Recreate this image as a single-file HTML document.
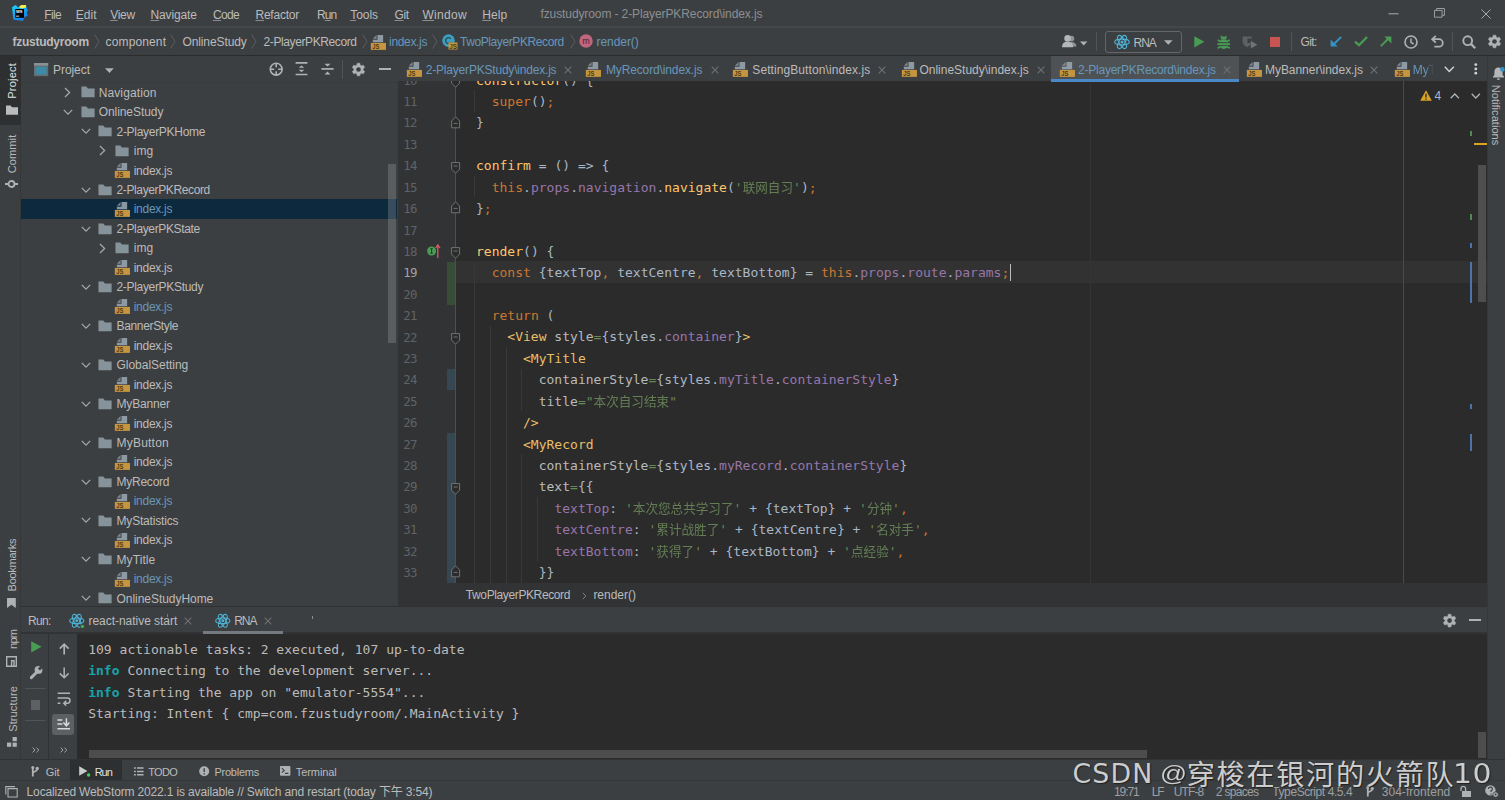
<!DOCTYPE html>
<html lang="en">
<head>
<meta charset="utf-8">
<title>fzustudyroom - 2-PlayerPKRecord\index.js</title>
<style>
*{box-sizing:border-box;margin:0;padding:0}
html,body{width:1505px;height:800px;overflow:hidden;background:#3c3f41}
body{position:relative;font-family:"Liberation Sans","Noto Sans CJK SC",sans-serif;font-size:12px;color:#bbbbbb}
.abs{position:absolute}
svg{display:block;overflow:visible}
.t{position:absolute;white-space:pre;line-height:16px;height:16px}
.mono{font-family:"DejaVu Sans Mono","Liberation Mono","Noto Sans CJK SC",monospace}
.code{font-size:13px;letter-spacing:0.014px}
.cj{font-size:12.58px;opacity:.9}
.con{font-size:13px;letter-spacing:0.014px;color:#bbbbbb}
.wm{font-family:"Liberation Sans","Noto Sans CJK SC",sans-serif;text-shadow:1px 1px 1px rgba(30,30,30,.9),0 0 1px rgba(40,40,40,.8)}
u{text-decoration:underline;text-underline-offset:1px;text-decoration-thickness:1px;text-decoration-color:rgba(187,187,187,.62)}
#menubar{left:0;top:0;width:1505px;height:27px;background:#3c3f41}
#navbar{left:0;top:26px;width:1505px;height:29px;background:#3c3f41;border-top:2px solid #45484a}
#navline{left:0;top:55px;width:1505px;height:1px;background:#2b2b2b}
#lstripe{left:0;top:56px;width:21px;height:704px;background:#3c3f41;border-right:1px solid #353739}
#lstripe-sel{left:0;top:56px;width:21px;height:69px;background:#2d2f30}
#proj{left:21px;top:56px;width:377px;height:550px;background:#3c3f41;overflow:hidden}
#projhead-line{left:21px;top:82px;width:377px;height:1px;background:#393b3d}
#tabs{left:398px;top:56px;width:1089px;height:25px;background:#3c3f41}
#editor{left:398px;top:81px;width:1089px;height:502px;background:#2b2b2b;overflow:hidden}
#gutter{left:0;top:0;width:57px;height:502px;background:#313335}
#crumbs{left:398px;top:583px;width:1089px;height:24px;background:#313335}
#rstripe{left:1487px;top:56px;width:18px;height:704px;background:#3c3f41;border-left:1px solid #353739}
#runsep{left:21px;top:606px;width:1466px;height:1px;background:#2f3133}
#runhead{left:21px;top:607px;width:1466px;height:26px;background:#3c3f41}
#runheadline{left:21px;top:632px;width:1466px;height:2px;background:#313335}
#runbody{left:77px;top:634px;width:1410px;height:125px;background:#2b2b2b}
#runtools{left:21px;top:634px;width:56px;height:126px;background:#3c3f41}
#bottombar{left:0;top:759px;width:1505px;height:21px;background:#3c3f41;border-top:1px solid #323232}
#status{left:0;top:780px;width:1505px;height:20px;background:#3c3f41;border-top:1px solid #353739}
</style>
</head>
<body>
<div class="abs" id="menubar"></div>
<div class="abs" id="navbar"></div>
<div class="abs" id="navline"></div>
<div class="abs" id="lstripe"></div>
<div class="abs" id="lstripe-sel"></div>
<div class="abs" id="proj"></div>
<div class="abs" id="projhead-line"></div>
<div class="abs" id="tabs"></div>
<div class="abs" id="editor"><div class="abs" id="gutter"></div>
<div class="abs" style="left:57.0px;top:180.4px;width:1032.0px;height:21.4px;background:#323232;"></div>
<div class="abs" style="left:691.6px;top:0.0px;width:1.0px;height:502.0px;background:#353535;"></div>
<div class="abs" style="left:1005.2px;top:0.0px;width:1.0px;height:502.0px;background:#4a4a4a;"></div>
<div class="abs" style="left:48.8px;top:180.6px;width:8.4px;height:43.0px;background:#384c38;"></div>
<div class="abs" style="left:48.8px;top:288.0px;width:8.4px;height:21.4px;background:#374752;"></div>
<div class="abs" style="left:48.8px;top:352.2px;width:8.4px;height:160.0px;background:#374752;"></div>
<div class="abs" style="left:57.0px;top:0.0px;width:1.0px;height:502.0px;background:#4d4f51;"></div>
<div class="abs" style="left:76.2px;top:9.3px;width:1.0px;height:21.4px;background:#393939;"></div>
<div class="abs" style="left:76.2px;top:95.0px;width:1.0px;height:21.4px;background:#393939;"></div>
<div class="abs" style="left:76.2px;top:180.6px;width:1.0px;height:321.1px;background:#393939;"></div>
<div class="abs" style="left:91.9px;top:244.8px;width:1.0px;height:256.9px;background:#393939;"></div>
<div class="abs" style="left:107.5px;top:266.2px;width:1.0px;height:235.5px;background:#393939;"></div>
<div class="abs" style="left:123.2px;top:287.6px;width:1.0px;height:42.8px;background:#393939;"></div>
<div class="abs" style="left:123.2px;top:373.3px;width:1.0px;height:128.5px;background:#393939;"></div>
<div class="abs" style="left:138.9px;top:416.1px;width:1.0px;height:64.2px;background:#393939;"></div>
<div class="t mono" style="left:5.3px;top:-8.4px;color:#606366;font-size:12.4px;letter-spacing:-0.75px;">10</div>
<div class="t mono" style="left:5.3px;top:13.0px;color:#606366;font-size:12.4px;letter-spacing:-0.75px;">11</div>
<div class="t mono" style="left:5.3px;top:34.4px;color:#606366;font-size:12.4px;letter-spacing:-0.75px;">12</div>
<div class="t mono" style="left:5.3px;top:55.8px;color:#606366;font-size:12.4px;letter-spacing:-0.75px;">13</div>
<div class="t mono" style="left:5.3px;top:77.2px;color:#606366;font-size:12.4px;letter-spacing:-0.75px;">14</div>
<div class="t mono" style="left:5.3px;top:98.7px;color:#606366;font-size:12.4px;letter-spacing:-0.75px;">15</div>
<div class="t mono" style="left:5.3px;top:120.1px;color:#606366;font-size:12.4px;letter-spacing:-0.75px;">16</div>
<div class="t mono" style="left:5.3px;top:141.5px;color:#606366;font-size:12.4px;letter-spacing:-0.75px;">17</div>
<div class="t mono" style="left:5.3px;top:162.9px;color:#606366;font-size:12.4px;letter-spacing:-0.75px;">18</div>
<div class="t mono" style="left:5.3px;top:184.3px;color:#a4a3a3;font-size:12.4px;letter-spacing:-0.75px;">19</div>
<div class="t mono" style="left:5.3px;top:205.7px;color:#606366;font-size:12.4px;letter-spacing:-0.75px;">20</div>
<div class="t mono" style="left:5.3px;top:227.1px;color:#606366;font-size:12.4px;letter-spacing:-0.75px;">21</div>
<div class="t mono" style="left:5.3px;top:248.5px;color:#606366;font-size:12.4px;letter-spacing:-0.75px;">22</div>
<div class="t mono" style="left:5.3px;top:269.9px;color:#606366;font-size:12.4px;letter-spacing:-0.75px;">23</div>
<div class="t mono" style="left:5.3px;top:291.4px;color:#606366;font-size:12.4px;letter-spacing:-0.75px;">24</div>
<div class="t mono" style="left:5.3px;top:312.8px;color:#606366;font-size:12.4px;letter-spacing:-0.75px;">25</div>
<div class="t mono" style="left:5.3px;top:334.2px;color:#606366;font-size:12.4px;letter-spacing:-0.75px;">26</div>
<div class="t mono" style="left:5.3px;top:355.6px;color:#606366;font-size:12.4px;letter-spacing:-0.75px;">27</div>
<div class="t mono" style="left:5.3px;top:377.0px;color:#606366;font-size:12.4px;letter-spacing:-0.75px;">28</div>
<div class="t mono" style="left:5.3px;top:398.4px;color:#606366;font-size:12.4px;letter-spacing:-0.75px;">29</div>
<div class="t mono" style="left:5.3px;top:419.8px;color:#606366;font-size:12.4px;letter-spacing:-0.75px;">30</div>
<div class="t mono" style="left:5.3px;top:441.2px;color:#606366;font-size:12.4px;letter-spacing:-0.75px;">31</div>
<div class="t mono" style="left:5.3px;top:462.6px;color:#606366;font-size:12.4px;letter-spacing:-0.75px;">32</div>
<div class="t mono" style="left:5.3px;top:484.0px;color:#606366;font-size:12.4px;letter-spacing:-0.75px;">33</div>
<svg class="abs" style="left:52.8px;top:-4.9px;" width="10" height="12" viewBox="0 0 10 12"><path d="M0.6,0.6 h8 v6.6 l-4,4 l-4,-4z" fill="#2b2b2b" stroke="#6f7376" stroke-width="1"/><path d="M2.6,4 h4" stroke="#6f7376" stroke-width="1"/></svg>
<svg class="abs" style="left:52.8px;top:80.7px;" width="10" height="12" viewBox="0 0 10 12"><path d="M0.6,0.6 h8 v6.6 l-4,4 l-4,-4z" fill="#2b2b2b" stroke="#6f7376" stroke-width="1"/><path d="M2.6,4 h4" stroke="#6f7376" stroke-width="1"/></svg>
<svg class="abs" style="left:52.8px;top:166.4px;" width="10" height="12" viewBox="0 0 10 12"><path d="M0.6,0.6 h8 v6.6 l-4,4 l-4,-4z" fill="#2b2b2b" stroke="#6f7376" stroke-width="1"/><path d="M2.6,4 h4" stroke="#6f7376" stroke-width="1"/></svg>
<svg class="abs" style="left:52.8px;top:252.0px;" width="10" height="12" viewBox="0 0 10 12"><path d="M0.6,0.6 h8 v6.6 l-4,4 l-4,-4z" fill="#2b2b2b" stroke="#6f7376" stroke-width="1"/><path d="M2.6,4 h4" stroke="#6f7376" stroke-width="1"/></svg>
<svg class="abs" style="left:52.8px;top:401.9px;" width="10" height="12" viewBox="0 0 10 12"><path d="M0.6,0.6 h8 v6.6 l-4,4 l-4,-4z" fill="#2b2b2b" stroke="#6f7376" stroke-width="1"/><path d="M2.6,4 h4" stroke="#6f7376" stroke-width="1"/></svg>
<svg class="abs" style="left:52.8px;top:34.6px;" width="10" height="13" viewBox="0 0 10 13"><path d="M0.6,11.8 h8 v-6.8 l-4,-4.2 l-4,4.2z" fill="#2b2b2b" stroke="#6f7376" stroke-width="1"/><path d="M2.6,7.4 h4" stroke="#6f7376" stroke-width="1"/></svg>
<svg class="abs" style="left:52.8px;top:120.3px;" width="10" height="13" viewBox="0 0 10 13"><path d="M0.6,11.8 h8 v-6.8 l-4,-4.2 l-4,4.2z" fill="#2b2b2b" stroke="#6f7376" stroke-width="1"/><path d="M2.6,7.4 h4" stroke="#6f7376" stroke-width="1"/></svg>
<svg class="abs" style="left:52.8px;top:484.2px;" width="10" height="13" viewBox="0 0 10 13"><path d="M0.6,11.8 h8 v-6.8 l-4,-4.2 l-4,4.2z" fill="#2b2b2b" stroke="#6f7376" stroke-width="1"/><path d="M2.6,7.4 h4" stroke="#6f7376" stroke-width="1"/></svg>
<svg class="abs" style="left:29.0px;top:162.5px;" width="14" height="15" viewBox="0 0 14 15"><circle cx="4.6" cy="7" r="4.5" fill="#499c54"/><path d="M3.4,4.7 h2.4 M4.6,4.7 v4.6 M3.4,9.3 h2.4" stroke="#1d3a22" stroke-width="0.9" fill="none"/><path d="M10.8,14 V1.6 M8.6,4 L10.8,0.8 L13,4" stroke="#db5860" stroke-width="1.3" fill="none"/></svg>
<div class="t mono code" style="left:78.0px;top:-10.5px;height:20px;line-height:20px;"><span style="color:#ffc66d">constructor</span><span style="color:#a9b7c6">() {</span></div>
<div class="t mono code" style="left:93.7px;top:10.9px;height:20px;line-height:20px;"><span style="color:#cc7832">super</span><span style="color:#a9b7c6">()</span><span style="color:#cc7832">;</span></div>
<div class="t mono code" style="left:78.0px;top:32.3px;height:20px;line-height:20px;"><span style="color:#a9b7c6">}</span></div>
<div class="t mono code" style="left:78.0px;top:75.1px;height:20px;line-height:20px;"><span style="color:#ffc66d">confirm</span><span style="color:#a9b7c6"> = () =&gt; {</span></div>
<div class="t mono code" style="left:93.7px;top:96.6px;height:20px;line-height:20px;"><span style="color:#cc7832">this</span><span style="color:#a9b7c6">.</span><span style="color:#9876aa">props</span><span style="color:#a9b7c6">.</span><span style="color:#9876aa">navigation</span><span style="color:#a9b7c6">.</span><span style="color:#ffc66d">navigate</span><span style="color:#a9b7c6">(</span><span style="color:#6a8759">'<span class="cj">联网自习</span>'</span><span style="color:#a9b7c6">)</span><span style="color:#cc7832">;</span></div>
<div class="t mono code" style="left:78.0px;top:118.0px;height:20px;line-height:20px;"><span style="color:#a9b7c6">}</span><span style="color:#cc7832">;</span></div>
<div class="t mono code" style="left:78.0px;top:160.8px;height:20px;line-height:20px;"><span style="color:#ffc66d">render</span><span style="color:#a9b7c6">() {</span></div>
<div class="t mono code" style="left:93.7px;top:182.2px;height:20px;line-height:20px;"><span style="color:#cc7832">const </span><span style="color:#a9b7c6">{textTop</span><span style="color:#cc7832">,</span><span style="color:#a9b7c6"> textCentre</span><span style="color:#cc7832">,</span><span style="color:#a9b7c6"> textBottom} = </span><span style="color:#cc7832">this</span><span style="color:#a9b7c6">.</span><span style="color:#9876aa">props</span><span style="color:#a9b7c6">.</span><span style="color:#9876aa">route</span><span style="color:#a9b7c6">.</span><span style="color:#9876aa">params</span><span style="color:#cc7832">;</span></div>
<div class="t mono code" style="left:93.7px;top:225.0px;height:20px;line-height:20px;"><span style="color:#cc7832">return </span><span style="color:#a9b7c6">(</span></div>
<div class="t mono code" style="left:109.3px;top:246.4px;height:20px;line-height:20px;"><span style="color:#e8bf6a">&lt;View </span><span style="color:#bababa">style</span><span style="color:#6a8759">=</span><span style="color:#a9b7c6">{styles.</span><span style="color:#9876aa">container</span><span style="color:#a9b7c6">}</span><span style="color:#e8bf6a">&gt;</span></div>
<div class="t mono code" style="left:125.0px;top:267.8px;height:20px;line-height:20px;"><span style="color:#e8bf6a">&lt;MyTitle</span></div>
<div class="t mono code" style="left:140.7px;top:289.2px;height:20px;line-height:20px;"><span style="color:#bababa">containerStyle</span><span style="color:#6a8759">=</span><span style="color:#a9b7c6">{styles.</span><span style="color:#9876aa">myTitle</span><span style="color:#a9b7c6">.</span><span style="color:#9876aa">containerStyle</span><span style="color:#a9b7c6">}</span></div>
<div class="t mono code" style="left:140.7px;top:310.7px;height:20px;line-height:20px;"><span style="color:#bababa">title</span><span style="color:#6a8759">="<span class="cj">本次自习结束</span>"</span></div>
<div class="t mono code" style="left:125.0px;top:332.1px;height:20px;line-height:20px;"><span style="color:#e8bf6a">/&gt;</span></div>
<div class="t mono code" style="left:125.0px;top:353.5px;height:20px;line-height:20px;"><span style="color:#e8bf6a">&lt;MyRecord</span></div>
<div class="t mono code" style="left:140.7px;top:374.9px;height:20px;line-height:20px;"><span style="color:#bababa">containerStyle</span><span style="color:#6a8759">=</span><span style="color:#a9b7c6">{styles.</span><span style="color:#9876aa">myRecord</span><span style="color:#a9b7c6">.</span><span style="color:#9876aa">containerStyle</span><span style="color:#a9b7c6">}</span></div>
<div class="t mono code" style="left:140.7px;top:396.3px;height:20px;line-height:20px;"><span style="color:#bababa">text</span><span style="color:#6a8759">=</span><span style="color:#a9b7c6">{{</span></div>
<div class="t mono code" style="left:156.4px;top:417.7px;height:20px;line-height:20px;"><span style="color:#9876aa">textTop</span><span style="color:#a9b7c6">: </span><span style="color:#6a8759">'<span class="cj">本次您总共学习了</span>'</span><span style="color:#a9b7c6"> + {textTop} + </span><span style="color:#6a8759">'<span class="cj">分钟</span>'</span><span style="color:#cc7832">,</span></div>
<div class="t mono code" style="left:156.4px;top:439.1px;height:20px;line-height:20px;"><span style="color:#9876aa">textCentre</span><span style="color:#a9b7c6">: </span><span style="color:#6a8759">'<span class="cj">累计战胜了</span>'</span><span style="color:#a9b7c6"> + {textCentre} + </span><span style="color:#6a8759">'<span class="cj">名对手</span>'</span><span style="color:#cc7832">,</span></div>
<div class="t mono code" style="left:156.4px;top:460.5px;height:20px;line-height:20px;"><span style="color:#9876aa">textBottom</span><span style="color:#a9b7c6">: </span><span style="color:#6a8759">'<span class="cj">获得了</span>'</span><span style="color:#a9b7c6"> + {textBottom} + </span><span style="color:#6a8759">'<span class="cj">点经验</span>'</span><span style="color:#cc7832">,</span></div>
<div class="t mono code" style="left:140.7px;top:481.9px;height:20px;line-height:20px;"><span style="color:#a9b7c6">}}</span></div>
<div class="abs" style="left:611.6px;top:183.4px;width:1.6px;height:16.4px;background:#bbbbbb;"></div>
<svg class="abs" style="left:1022.0px;top:8.8px;" width="12" height="11" viewBox="0 0 12 11"><path d="M6,0.3 L11.8,10.7 H0.2z" fill="#d9a520"/><path d="M6,3.8 v3.6 M6,8.4 v1.3" stroke="#2b2b2b" stroke-width="1.4"/></svg>
<div class="t" style="left:1036.6px;top:7.0px;color:#a9b7c6;letter-spacing:0.000px;">4</div>
<svg class="abs" style="left:1052.4px;top:12.0px;" width="10" height="6" viewBox="0 0 10 6"><path d="M0.7,5.3 L4.8,1 L8.9,5.3" fill="none" stroke="#b2b4b5" stroke-width="1.25"/></svg>
<svg class="abs" style="left:1072.6px;top:12.4px;" width="10" height="6" viewBox="0 0 10 6"><path d="M0.7,0.7 L4.8,5 L8.9,0.7" fill="none" stroke="#b2b4b5" stroke-width="1.25"/></svg>
<div class="abs" style="left:1072.2px;top:49.8px;width:1.6px;height:5.0px;background:#4f8a55;"></div>
<div class="abs" style="left:1075.8px;top:62.0px;width:13.2px;height:2.4px;background:#d9a520;"></div>
<div class="abs" style="left:1079.6px;top:84.4px;width:8.0px;height:137.0px;background:#4e4e4e;"></div>
<div class="abs" style="left:1072.2px;top:133.0px;width:1.6px;height:6.0px;background:#4f8a55;"></div>
<div class="abs" style="left:1072.2px;top:162.0px;width:1.6px;height:5.4px;background:#4b75a8;"></div>
<div class="abs" style="left:1072.2px;top:181.0px;width:1.6px;height:41.4px;background:#4b75a8;"></div>
<div class="abs" style="left:1072.2px;top:323.0px;width:1.6px;height:5.0px;background:#4b75a8;"></div>
<div class="abs" style="left:1072.2px;top:353.0px;width:1.6px;height:17.0px;background:#4b75a8;"></div>
</div>
<div class="abs" id="crumbs"></div>
<div class="abs" id="rstripe"></div>
<div class="abs" id="runsep"></div>
<div class="abs" id="runhead"></div>
<div class="abs" id="runheadline"></div>
<div class="abs" id="runtools"></div>
<div class="abs" id="runbody"></div>
<div class="abs" id="bottombar"></div>
<div class="abs" id="status"></div>
<svg class="abs" style="left:11.0px;top:4.0px;" width="18" height="18" viewBox="0 0 18 18"><defs><linearGradient id="wsg" x1="0" y1="0" x2="0.6" y2="1"><stop offset="0" stop-color="#1fd3fb"/><stop offset=".55" stop-color="#0ea5f3"/><stop offset="1" stop-color="#1a7df0"/></linearGradient></defs><path d="M1,3.2 L4.4,1 L7.6,3.4 L10,1.2 L15,1 L15.6,4 L17,6.6 L15.6,8.6 L16.9,11.6 L13.6,13 L12,16.9 L2.4,15.6z" fill="url(#wsg)"/><path d="M7.8,3.3 L10.2,1.1 L14.9,1 L15.2,3.4 L11,4.4z" fill="#f3ef4c"/><rect x="4.2" y="5" width="8.8" height="8.8" fill="#000"/><text x="4.9" y="9.2" font-family="Liberation Sans,sans-serif" font-weight="bold" font-size="4.2" textLength="6.6" lengthAdjust="spacingAndGlyphs" fill="#fff">WS</text><rect x="5" y="11.7" width="3.2" height="0.9" fill="#e8e8e8"/></svg>
<div class="t" style="left:44.2px;top:6.6px;letter-spacing:-0.586px;"><u>F</u>ile</div>
<div class="t" style="left:75.7px;top:6.6px;letter-spacing:0.099px;"><u>E</u>dit</div>
<div class="t" style="left:110.2px;top:6.6px;letter-spacing:-0.304px;"><u>V</u>iew</div>
<div class="t" style="left:150.5px;top:6.6px;letter-spacing:-0.139px;"><u>N</u>avigate</div>
<div class="t" style="left:212.9px;top:6.6px;letter-spacing:-0.601px;"><u>C</u>ode</div>
<div class="t" style="left:255.5px;top:6.6px;letter-spacing:-0.237px;"><u>R</u>efactor</div>
<div class="t" style="left:317.1px;top:6.6px;letter-spacing:-0.923px;">R<u>u</u>n</div>
<div class="t" style="left:350.2px;top:6.6px;letter-spacing:-0.029px;"><u>T</u>ools</div>
<div class="t" style="left:394.5px;top:6.6px;letter-spacing:-0.422px;"><u>G</u>it</div>
<div class="t" style="left:422.4px;top:6.6px;letter-spacing:0.303px;"><u>W</u>indow</div>
<div class="t" style="left:482.2px;top:6.6px;letter-spacing:0.071px;"><u>H</u>elp</div>
<div class="t" style="left:540.5px;top:6.0px;color:#8c8f91;letter-spacing:-0.105px;">fzustudyroom - 2-PlayerPKRecord\index.js</div>
<svg class="abs" style="left:1388.0px;top:13.0px;" width="11" height="2" viewBox="0 0 11 2"><rect x="0.5" y="0.3" width="10" height="1" fill="#a9abad"/></svg>
<svg class="abs" style="left:1433.6px;top:8.4px;" width="11.4" height="10" viewBox="0 0 11.4 10"><path d="M0.5,2.4 h7.6 v6.8 h-7.6z M2.6,2.4 V0.5 H10.4 V7.4 H8.2" fill="none" stroke="#a6a8aa" stroke-width="0.9"/></svg>
<svg class="abs" style="left:1480.5px;top:8.5px;" width="10" height="10" viewBox="0 0 10 10"><path d="M0.5,0.5 L9.5,9.5 M9.5,0.5 L0.5,9.5" stroke="#b4b6b7" stroke-width="0.9" fill="none"/></svg>
<div class="t" style="left:12.4px;top:33.6px;font-weight:bold;letter-spacing:-0.240px;">fzustudyroom</div>
<svg class="abs" style="left:93.5px;top:34.1px;" width="6" height="15" viewBox="0 0 6 15"><path d="M0.6,0.5 L5,7.5 L0.6,14.5" fill="none" stroke="#5b5e60" stroke-width="1"/></svg>
<div class="t" style="left:105.6px;top:33.6px;letter-spacing:0.128px;">component</div>
<svg class="abs" style="left:170.0px;top:34.1px;" width="6" height="15" viewBox="0 0 6 15"><path d="M0.6,0.5 L5,7.5 L0.6,14.5" fill="none" stroke="#5b5e60" stroke-width="1"/></svg>
<div class="t" style="left:182.4px;top:33.6px;letter-spacing:-0.097px;">OnlineStudy</div>
<svg class="abs" style="left:250.7px;top:34.1px;" width="6" height="15" viewBox="0 0 6 15"><path d="M0.6,0.5 L5,7.5 L0.6,14.5" fill="none" stroke="#5b5e60" stroke-width="1"/></svg>
<div class="t" style="left:263.5px;top:33.6px;letter-spacing:-0.392px;">2-PlayerPKRecord</div>
<svg class="abs" style="left:361.5px;top:34.1px;" width="6" height="15" viewBox="0 0 6 15"><path d="M0.6,0.5 L5,7.5 L0.6,14.5" fill="none" stroke="#5b5e60" stroke-width="1"/></svg>
<svg class="abs" style="left:370.0px;top:33.6px;" width="15.6" height="15.6" viewBox="0 0 16.6 16.6"><polygon fill="#9aa7b0" fill-opacity=".7" points="7,1 3,5 7,5"/><polygon fill="#9aa7b0" fill-opacity=".88" points="8,1 8,6 3,6 3,8.7 14,8.7 14,1"/><rect x="0.9" y="9.5" width="16.1" height="7.4" fill="#c5963f"/><text x="2.3" y="15.9" font-family="Liberation Sans,sans-serif" font-weight="bold" font-size="7.2" textLength="7.6" lengthAdjust="spacingAndGlyphs" fill="#4d3a17">JS</text></svg>
<div class="t" style="left:389.1px;top:33.6px;color:#6897bb;letter-spacing:-0.341px;">index.js</div>
<svg class="abs" style="left:432.3px;top:34.1px;" width="6" height="15" viewBox="0 0 6 15"><path d="M0.6,0.5 L5,7.5 L0.6,14.5" fill="none" stroke="#5b5e60" stroke-width="1"/></svg>
<svg class="abs" style="left:442.0px;top:33.8px;" width="16" height="16" viewBox="0 0 16 16"><circle cx="6.5" cy="6.6" r="6.3" fill="#3d9fbf"/><path d="M8.8,8.4 a2.9,2.9 0 1 1 0,-3.6" fill="none" stroke="#2c4a57" stroke-width="1.3"/><rect x="6.5" y="8.5" width="9" height="7" fill="#c5963f"/><text x="7.3" y="14.6" font-family="Liberation Sans,sans-serif" font-weight="bold" font-size="6.3" fill="#4d3a17">JS</text></svg>
<div class="t" style="left:459.9px;top:33.6px;color:#6897bb;letter-spacing:-0.395px;">TwoPlayerPKRecord</div>
<svg class="abs" style="left:570.0px;top:34.1px;" width="6" height="15" viewBox="0 0 6 15"><path d="M0.6,0.5 L5,7.5 L0.6,14.5" fill="none" stroke="#5b5e60" stroke-width="1"/></svg>
<svg class="abs" style="left:579.0px;top:34.3px;" width="14" height="14" viewBox="0 0 14 14"><circle cx="7" cy="7" r="6.7" fill="#c0667f"/><text x="7" y="10" text-anchor="middle" font-family="Liberation Sans,sans-serif" font-size="9" fill="#4a2430">m</text></svg>
<div class="t" style="left:596.6px;top:33.6px;color:#6897bb;letter-spacing:-0.070px;">render()</div>
<svg class="abs" style="left:1062.0px;top:35.4px;" width="15" height="12.6" viewBox="0 0 15 12.6"><circle cx="9.4" cy="3.6" r="2.9" fill="#8f9193"/><path d="M8.5,7 q5.5,-0.6 6,4.6 h-4z" fill="#8f9193"/><circle cx="5.6" cy="3.4" r="3.3" fill="#b4b6b7"/><path d="M0,12.2 q0,-5.4 5.6,-5.4 q5.6,0 5.6,5.4z" fill="#b4b6b7"/></svg>
<svg class="abs" style="left:1079.5px;top:41.0px;" width="8" height="5" viewBox="0 0 8 5"><path d="M0,0.5 h7.4 l-3.7,4z" fill="#afb1b3"/></svg>
<div class="abs" style="left:1095.5px;top:31.5px;width:1.0px;height:19.0px;background:#515456;"></div>
<div class="abs" style="left:1105px;top:31px;width:77px;height:21.5px;border:1px solid #646769;border-radius:3px"></div>
<svg class="abs" style="left:1113.5px;top:33.7px;" width="16" height="16" viewBox="0 0 16 16"><g fill="none" stroke="#4fb3d6" stroke-width="1.1"><ellipse cx="8" cy="8" rx="7.3" ry="2.9"/><ellipse cx="8" cy="8" rx="7.3" ry="2.9" transform="rotate(60 8 8)"/><ellipse cx="8" cy="8" rx="7.3" ry="2.9" transform="rotate(120 8 8)"/></g><circle cx="8" cy="8" r="1.5" fill="#4fb3d6"/></svg>
<div class="t" style="left:1133.6px;top:34.8px;letter-spacing:-1.100px;">RNA</div>
<svg class="abs" style="left:1163.5px;top:39.8px;" width="9" height="5" viewBox="0 0 9 5"><path d="M0,0.3 h8.6 l-4.3,4.4z" fill="#afb1b3"/></svg>
<svg class="abs" style="left:1194.3px;top:35.8px;" width="11" height="12" viewBox="0 0 11 12"><path d="M0.3,0.2 L10.4,5.8 L0.3,11.6z" fill="#499c54"/></svg>
<svg class="abs" style="left:1217.2px;top:34.6px;" width="13.4" height="14" viewBox="0 0 13.4 14"><path d="M3.8,0.8 L5.4,2.8 M9.6,0.8 L8,2.8" stroke="#499c54" stroke-width="1.3" fill="none"/><path d="M3.4,6.4 L0.7,4.9 M10,6.4 L12.7,4.9 M3.4,9.1 H0.3 M10,9.1 H13.1 M3.4,11.6 L0.7,13.2 M10,11.6 L12.7,13.2" stroke="#499c54" stroke-width="1.7" fill="none"/><rect x="2.7" y="4.2" width="8" height="9.7" rx="3.8" fill="#499c54"/><path d="M3.7,4.3 a3,2.8 0 0 1 6,0z" fill="#499c54"/><path d="M3,7.7 h7.4 M3,10.6 h7.4" stroke="#3c3f41" stroke-width="0.9"/></svg>
<svg class="abs" style="left:1242.0px;top:36.4px;" width="16" height="13" viewBox="0 0 16 13"><path d="M0.6,0.6 h9 v5 c0,3 -2.4,4.6 -4.5,5.6 c-2.1,-1 -4.5,-2.6 -4.5,-5.6z" fill="#5e6163"/><path d="M5.4,2.6 h4.4 v4.4 h-4.4z" fill="#3c3f41"/><path d="M8.8,4.8 L15.4,8.7 L8.8,12.6z" fill="#707375"/></svg>
<div class="abs" style="left:1270.2px;top:36.6px;width:10.2px;height:10.0px;background:#c75450;"></div>
<div class="abs" style="left:1291.0px;top:31.5px;width:1.0px;height:19.0px;background:#515456;"></div>
<div class="t" style="left:1300.4px;top:33.6px;letter-spacing:-0.557px;">Git:</div>
<svg class="abs" style="left:1329.6px;top:35.8px;" width="12" height="11" viewBox="0 0 12 11"><path d="M11.2,0.9 L4,8" fill="none" stroke="#3592c4" stroke-width="1.9"/><path d="M0.6,10.6 V3.6 L7.6,10.6z" fill="#3592c4"/></svg>
<svg class="abs" style="left:1354.0px;top:36.0px;" width="14" height="11" viewBox="0 0 14 11"><path d="M1,5.6 L5,9.2 L13,1" fill="none" stroke="#499c54" stroke-width="2.3"/></svg>
<svg class="abs" style="left:1379.6px;top:35.8px;" width="12" height="11" viewBox="0 0 12 11"><path d="M0.8,10.2 L8,3" fill="none" stroke="#499c54" stroke-width="1.9"/><path d="M11.4,0.4 V7.4 L4.4,0.4z" fill="#499c54"/></svg>
<svg class="abs" style="left:1403.8px;top:34.6px;" width="14" height="14" viewBox="0 0 14 14"><circle cx="7" cy="7" r="6" fill="none" stroke="#afb1b3" stroke-width="1.6"/><path d="M7,3.4 V7.4 L9.6,9" fill="none" stroke="#afb1b3" stroke-width="1.5"/></svg>
<svg class="abs" style="left:1430.5px;top:35.0px;" width="13" height="13" viewBox="0 0 13 13"><path d="M4.8,0.8 L1.2,4.2 L4.8,7.6 M1.4,4.2 H8 a3.7,3.7 0 0 1 0,7.5 H3.4" fill="none" stroke="#afb1b3" stroke-width="1.8"/></svg>
<div class="abs" style="left:1452.4px;top:31.5px;width:1.0px;height:19.0px;background:#515456;"></div>
<svg class="abs" style="left:1462.0px;top:34.8px;" width="14" height="14" viewBox="0 0 14 14"><circle cx="5.7" cy="5.7" r="4.4" fill="none" stroke="#afb1b3" stroke-width="1.9"/><path d="M8.9,8.9 L13.2,13.2" stroke="#afb1b3" stroke-width="2.3"/></svg>
<svg class="abs" style="left:1487.8px;top:35.0px;" width="13" height="13" viewBox="0 0 14 14"><polygon points="5.00,2.53 5.54,0.15 8.46,0.15 9.00,2.53 9.88,3.03 12.20,2.31 13.66,4.84 11.87,6.49 11.87,7.51 13.66,9.16 12.20,11.69 9.88,10.97 9.00,11.47 8.46,13.85 5.54,13.85 5.00,11.47 4.12,10.97 1.80,11.69 0.34,9.16 2.13,7.51 2.13,6.49 0.34,4.84 1.80,2.31 4.12,3.03" fill="#afb1b3" stroke="#afb1b3" stroke-width="0.5" stroke-linejoin="round"/><circle cx="7" cy="7" r="2.5" fill="#3c3f41"/></svg>
<div class="t" style="left:-5.7px;top:72.8px;color:#dfe0e0;font-size:11px;letter-spacing:0.225px;transform:rotate(-90deg);transform-origin:50% 50%;width:35.6px;text-align:left;">Project</div>
<svg class="abs" style="left:5.6px;top:104.6px;" width="12" height="10" viewBox="0 0 12 10"><path d="M0,0.4 h4.6 l1.4,1.8 h6 v7.6 H0z" fill="#b9bbbc"/></svg>
<div class="t" style="left:-6.6px;top:146.2px;color:#bbbbbb;font-size:11px;letter-spacing:0.102px;transform:rotate(-90deg);transform-origin:50% 50%;width:38.4px;text-align:left;">Commit</div>
<svg class="abs" style="left:5.0px;top:178.6px;" width="13" height="10" viewBox="0 0 13 10"><circle cx="6.5" cy="5" r="3" fill="none" stroke="#afb1b3" stroke-width="1.8"/><path d="M0,5 h3.2 M9.8,5 h3.2" stroke="#afb1b3" stroke-width="1.8"/></svg>
<div class="t" style="left:-13.8px;top:557.4px;color:#bbbbbb;font-size:11px;letter-spacing:-0.279px;transform:rotate(-90deg);transform-origin:50% 50%;width:52.8px;text-align:left;">Bookmarks</div>
<svg class="abs" style="left:7.0px;top:597.6px;" width="9" height="10" viewBox="0 0 9 10"><path d="M0,0 h8.8 v10 l-4.4,-3.2 l-4.4,3.2z" fill="#afb1b3"/></svg>
<div class="t" style="left:2.7px;top:630.9px;color:#bbbbbb;font-size:11px;letter-spacing:-0.803px;transform:rotate(-90deg);transform-origin:50% 50%;width:19.8px;text-align:left;">npm</div>
<svg class="abs" style="left:6.2px;top:655.6px;" width="11" height="11" viewBox="0 0 11 11"><path d="M0.7,0.7 h9.6 v9.6 h-9.6z M5.6,10 v-5.2 h2.4 v5.2" fill="none" stroke="#afb1b3" stroke-width="1.4"/></svg>
<div class="t" style="left:-10.3px;top:700.9px;color:#bbbbbb;font-size:11px;letter-spacing:0.132px;transform:rotate(-90deg);transform-origin:50% 50%;width:45.7px;text-align:left;">Structure</div>
<svg class="abs" style="left:6.6px;top:737.4px;" width="10" height="10" viewBox="0 0 10 10"><rect x="5.6" y="0" width="4.2" height="4.2" fill="#afb1b3"/><rect x="0" y="5.6" width="4.2" height="4.2" fill="#afb1b3"/><rect x="5.6" y="5.6" width="4.2" height="4.2" fill="#afb1b3"/></svg>
<svg class="abs" style="left:34.0px;top:62.9px;" width="14.2" height="13.2" viewBox="0 0 14.2 13.2"><rect x="0" y="0" width="14.2" height="13.2" fill="#676c6f"/><rect x="0" y="0" width="14.2" height="2.6" fill="#879197"/><rect x="1.5" y="3.8" width="11.1" height="7.9" fill="#3b8aa8"/></svg>
<div class="t" style="left:53.0px;top:62.3px;letter-spacing:-0.060px;">Project</div>
<svg class="abs" style="left:104.6px;top:68.0px;" width="9" height="5.4" viewBox="0 0 9 5.4"><path d="M0,0.3 h8.8 l-4.4,4.8z" fill="#afb1b3"/></svg>
<svg class="abs" style="left:269.2px;top:61.7px;" width="14.4" height="14.4" viewBox="0 0 14.4 14.4"><circle cx="7.2" cy="7.2" r="5.9" fill="none" stroke="#afb1b3" stroke-width="1.6"/><path d="M7.2,1 v4.2 M7.2,9.2 v4.2 M1,7.2 h4.2 M9.2,7.2 h4.2" stroke="#afb1b3" stroke-width="1.6"/></svg>
<svg class="abs" style="left:295.2px;top:62.0px;" width="13" height="14" viewBox="0 0 13 14"><path d="M0.6,0.9 h11.8 M0.6,12.5 h11.8" stroke="#afb1b3" stroke-width="1.7"/><path d="M6.5,3.4 l2.8,2.4 h-5.6z M6.5,10.2 l2.8,-2.4 h-5.6z" fill="#afb1b3"/></svg>
<svg class="abs" style="left:321.0px;top:62.0px;" width="13" height="14" viewBox="0 0 13 14"><path d="M0.4,6.9 h12.2" stroke="#afb1b3" stroke-width="1.7"/><path d="M6.5,4.4 l3,-2.7 h-6z M6.5,9.6 l3,2.8 h-6z" fill="#afb1b3"/></svg>
<div class="abs" style="left:342.4px;top:59.5px;width:1.0px;height:19.0px;background:#515456;"></div>
<svg class="abs" style="left:352.3px;top:62.8px;" width="13" height="13" viewBox="0 0 14 14"><polygon points="5.00,2.53 5.54,0.15 8.46,0.15 9.00,2.53 9.88,3.03 12.20,2.31 13.66,4.84 11.87,6.49 11.87,7.51 13.66,9.16 12.20,11.69 9.88,10.97 9.00,11.47 8.46,13.85 5.54,13.85 5.00,11.47 4.12,10.97 1.80,11.69 0.34,9.16 2.13,7.51 2.13,6.49 0.34,4.84 1.80,2.31 4.12,3.03" fill="#afb1b3" stroke="#afb1b3" stroke-width="0.5" stroke-linejoin="round"/><circle cx="7" cy="7" r="2.5" fill="#3c3f41"/></svg>
<div class="abs" style="left:378.8px;top:67.9px;width:12.2px;height:2.2px;background:#afb1b3;"></div>
<div class="abs" style="left:21.0px;top:199.3px;width:376.4px;height:19.3px;background:#0d293e;"></div>
<svg class="abs" style="left:80.2px;top:84.4px;" width="15.6" height="15.6" viewBox="0 0 16 16"><path d="M1.5,2.5 h5 l1.6,2.2 h6.9 v9 H1.5z" fill="#87939a"/></svg>
<svg class="abs" style="left:64.1px;top:86.8px;" width="7" height="11" viewBox="0 0 7 11"><path d="M1,1 L5.6,5.5 L1,10" fill="none" stroke="#a4a8aa" stroke-width="1.3"/></svg>
<div class="t" style="left:98.7px;top:84.7px;letter-spacing:0.111px;">Navigation</div>
<svg class="abs" style="left:80.2px;top:103.9px;" width="15.6" height="15.6" viewBox="0 0 16 16"><path d="M1.5,2.5 h5 l1.6,2.2 h6.9 v9 H1.5z" fill="#87939a"/></svg>
<svg class="abs" style="left:63.1px;top:108.8px;" width="10" height="7" viewBox="0 0 10 7"><path d="M0.8,0.9 L5,5.1 L9.2,0.9" fill="none" stroke="#a4a8aa" stroke-width="1.3"/></svg>
<div class="t" style="left:98.7px;top:104.2px;letter-spacing:-0.067px;">OnlineStudy</div>
<svg class="abs" style="left:97.1px;top:123.3px;" width="15.6" height="15.6" viewBox="0 0 16 16"><path d="M1.5,2.5 h5 l1.6,2.2 h6.9 v9 H1.5z" fill="#87939a"/></svg>
<svg class="abs" style="left:80.9px;top:128.2px;" width="10" height="7" viewBox="0 0 10 7"><path d="M0.8,0.9 L5,5.1 L9.2,0.9" fill="none" stroke="#a4a8aa" stroke-width="1.3"/></svg>
<div class="t" style="left:116.5px;top:123.6px;letter-spacing:-0.293px;">2-PlayerPKHome</div>
<svg class="abs" style="left:114.3px;top:142.8px;" width="15.6" height="15.6" viewBox="0 0 16 16"><path d="M1.5,2.5 h5 l1.6,2.2 h6.9 v9 H1.5z" fill="#87939a"/></svg>
<svg class="abs" style="left:99.1px;top:145.2px;" width="7" height="11" viewBox="0 0 7 11"><path d="M1,1 L5.6,5.5 L1,10" fill="none" stroke="#a4a8aa" stroke-width="1.3"/></svg>
<div class="t" style="left:133.7px;top:143.1px;letter-spacing:0.128px;">img</div>
<svg class="abs" style="left:114.2px;top:162.1px;" width="15.6" height="15.6" viewBox="0 0 16.6 16.6"><polygon fill="#9aa7b0" fill-opacity=".7" points="7,1 3,5 7,5"/><polygon fill="#9aa7b0" fill-opacity=".88" points="8,1 8,6 3,6 3,8.7 14,8.7 14,1"/><rect x="0.9" y="9.5" width="16.1" height="7.4" fill="#c5963f"/><text x="2.3" y="15.9" font-family="Liberation Sans,sans-serif" font-weight="bold" font-size="7.2" textLength="7.6" lengthAdjust="spacingAndGlyphs" fill="#4d3a17">JS</text></svg>
<div class="t" style="left:133.7px;top:162.5px;letter-spacing:-0.270px;">index.js</div>
<svg class="abs" style="left:97.1px;top:181.7px;" width="15.6" height="15.6" viewBox="0 0 16 16"><path d="M1.5,2.5 h5 l1.6,2.2 h6.9 v9 H1.5z" fill="#87939a"/></svg>
<svg class="abs" style="left:80.9px;top:186.6px;" width="10" height="7" viewBox="0 0 10 7"><path d="M0.8,0.9 L5,5.1 L9.2,0.9" fill="none" stroke="#a4a8aa" stroke-width="1.3"/></svg>
<div class="t" style="left:116.5px;top:182.0px;letter-spacing:-0.372px;">2-PlayerPKRecord</div>
<svg class="abs" style="left:114.2px;top:201.0px;" width="15.6" height="15.6" viewBox="0 0 16.6 16.6"><polygon fill="#9aa7b0" fill-opacity=".7" points="7,1 3,5 7,5"/><polygon fill="#9aa7b0" fill-opacity=".88" points="8,1 8,6 3,6 3,8.7 14,8.7 14,1"/><rect x="0.9" y="9.5" width="16.1" height="7.4" fill="#c5963f"/><text x="2.3" y="15.9" font-family="Liberation Sans,sans-serif" font-weight="bold" font-size="7.2" textLength="7.6" lengthAdjust="spacingAndGlyphs" fill="#4d3a17">JS</text></svg>
<div class="t" style="left:133.7px;top:201.4px;color:#6897bb;letter-spacing:-0.270px;">index.js</div>
<svg class="abs" style="left:97.1px;top:220.6px;" width="15.6" height="15.6" viewBox="0 0 16 16"><path d="M1.5,2.5 h5 l1.6,2.2 h6.9 v9 H1.5z" fill="#87939a"/></svg>
<svg class="abs" style="left:80.9px;top:225.5px;" width="10" height="7" viewBox="0 0 10 7"><path d="M0.8,0.9 L5,5.1 L9.2,0.9" fill="none" stroke="#a4a8aa" stroke-width="1.3"/></svg>
<div class="t" style="left:116.5px;top:220.9px;letter-spacing:-0.358px;">2-PlayerPKState</div>
<svg class="abs" style="left:114.3px;top:240.1px;" width="15.6" height="15.6" viewBox="0 0 16 16"><path d="M1.5,2.5 h5 l1.6,2.2 h6.9 v9 H1.5z" fill="#87939a"/></svg>
<svg class="abs" style="left:99.1px;top:242.5px;" width="7" height="11" viewBox="0 0 7 11"><path d="M1,1 L5.6,5.5 L1,10" fill="none" stroke="#a4a8aa" stroke-width="1.3"/></svg>
<div class="t" style="left:133.7px;top:240.4px;letter-spacing:0.128px;">img</div>
<svg class="abs" style="left:114.2px;top:259.4px;" width="15.6" height="15.6" viewBox="0 0 16.6 16.6"><polygon fill="#9aa7b0" fill-opacity=".7" points="7,1 3,5 7,5"/><polygon fill="#9aa7b0" fill-opacity=".88" points="8,1 8,6 3,6 3,8.7 14,8.7 14,1"/><rect x="0.9" y="9.5" width="16.1" height="7.4" fill="#c5963f"/><text x="2.3" y="15.9" font-family="Liberation Sans,sans-serif" font-weight="bold" font-size="7.2" textLength="7.6" lengthAdjust="spacingAndGlyphs" fill="#4d3a17">JS</text></svg>
<div class="t" style="left:133.7px;top:259.8px;letter-spacing:-0.270px;">index.js</div>
<svg class="abs" style="left:97.1px;top:279.0px;" width="15.6" height="15.6" viewBox="0 0 16 16"><path d="M1.5,2.5 h5 l1.6,2.2 h6.9 v9 H1.5z" fill="#87939a"/></svg>
<svg class="abs" style="left:80.9px;top:283.9px;" width="10" height="7" viewBox="0 0 10 7"><path d="M0.8,0.9 L5,5.1 L9.2,0.9" fill="none" stroke="#a4a8aa" stroke-width="1.3"/></svg>
<div class="t" style="left:116.5px;top:279.3px;letter-spacing:-0.321px;">2-PlayerPKStudy</div>
<svg class="abs" style="left:114.2px;top:298.3px;" width="15.6" height="15.6" viewBox="0 0 16.6 16.6"><polygon fill="#9aa7b0" fill-opacity=".7" points="7,1 3,5 7,5"/><polygon fill="#9aa7b0" fill-opacity=".88" points="8,1 8,6 3,6 3,8.7 14,8.7 14,1"/><rect x="0.9" y="9.5" width="16.1" height="7.4" fill="#c5963f"/><text x="2.3" y="15.9" font-family="Liberation Sans,sans-serif" font-weight="bold" font-size="7.2" textLength="7.6" lengthAdjust="spacingAndGlyphs" fill="#4d3a17">JS</text></svg>
<div class="t" style="left:133.7px;top:298.7px;color:#6897bb;letter-spacing:-0.270px;">index.js</div>
<svg class="abs" style="left:97.1px;top:317.9px;" width="15.6" height="15.6" viewBox="0 0 16 16"><path d="M1.5,2.5 h5 l1.6,2.2 h6.9 v9 H1.5z" fill="#87939a"/></svg>
<svg class="abs" style="left:80.9px;top:322.8px;" width="10" height="7" viewBox="0 0 10 7"><path d="M0.8,0.9 L5,5.1 L9.2,0.9" fill="none" stroke="#a4a8aa" stroke-width="1.3"/></svg>
<div class="t" style="left:116.5px;top:318.2px;letter-spacing:-0.338px;">BannerStyle</div>
<svg class="abs" style="left:114.2px;top:337.3px;" width="15.6" height="15.6" viewBox="0 0 16.6 16.6"><polygon fill="#9aa7b0" fill-opacity=".7" points="7,1 3,5 7,5"/><polygon fill="#9aa7b0" fill-opacity=".88" points="8,1 8,6 3,6 3,8.7 14,8.7 14,1"/><rect x="0.9" y="9.5" width="16.1" height="7.4" fill="#c5963f"/><text x="2.3" y="15.9" font-family="Liberation Sans,sans-serif" font-weight="bold" font-size="7.2" textLength="7.6" lengthAdjust="spacingAndGlyphs" fill="#4d3a17">JS</text></svg>
<div class="t" style="left:133.7px;top:337.7px;letter-spacing:-0.270px;">index.js</div>
<svg class="abs" style="left:97.1px;top:356.8px;" width="15.6" height="15.6" viewBox="0 0 16 16"><path d="M1.5,2.5 h5 l1.6,2.2 h6.9 v9 H1.5z" fill="#87939a"/></svg>
<svg class="abs" style="left:80.9px;top:361.7px;" width="10" height="7" viewBox="0 0 10 7"><path d="M0.8,0.9 L5,5.1 L9.2,0.9" fill="none" stroke="#a4a8aa" stroke-width="1.3"/></svg>
<div class="t" style="left:116.5px;top:357.1px;letter-spacing:-0.021px;">GlobalSetting</div>
<svg class="abs" style="left:114.2px;top:376.2px;" width="15.6" height="15.6" viewBox="0 0 16.6 16.6"><polygon fill="#9aa7b0" fill-opacity=".7" points="7,1 3,5 7,5"/><polygon fill="#9aa7b0" fill-opacity=".88" points="8,1 8,6 3,6 3,8.7 14,8.7 14,1"/><rect x="0.9" y="9.5" width="16.1" height="7.4" fill="#c5963f"/><text x="2.3" y="15.9" font-family="Liberation Sans,sans-serif" font-weight="bold" font-size="7.2" textLength="7.6" lengthAdjust="spacingAndGlyphs" fill="#4d3a17">JS</text></svg>
<div class="t" style="left:133.7px;top:376.6px;letter-spacing:-0.270px;">index.js</div>
<svg class="abs" style="left:97.1px;top:395.7px;" width="15.6" height="15.6" viewBox="0 0 16 16"><path d="M1.5,2.5 h5 l1.6,2.2 h6.9 v9 H1.5z" fill="#87939a"/></svg>
<svg class="abs" style="left:80.9px;top:400.6px;" width="10" height="7" viewBox="0 0 10 7"><path d="M0.8,0.9 L5,5.1 L9.2,0.9" fill="none" stroke="#a4a8aa" stroke-width="1.3"/></svg>
<div class="t" style="left:116.5px;top:396.0px;letter-spacing:-0.158px;">MyBanner</div>
<svg class="abs" style="left:114.2px;top:415.1px;" width="15.6" height="15.6" viewBox="0 0 16.6 16.6"><polygon fill="#9aa7b0" fill-opacity=".7" points="7,1 3,5 7,5"/><polygon fill="#9aa7b0" fill-opacity=".88" points="8,1 8,6 3,6 3,8.7 14,8.7 14,1"/><rect x="0.9" y="9.5" width="16.1" height="7.4" fill="#c5963f"/><text x="2.3" y="15.9" font-family="Liberation Sans,sans-serif" font-weight="bold" font-size="7.2" textLength="7.6" lengthAdjust="spacingAndGlyphs" fill="#4d3a17">JS</text></svg>
<div class="t" style="left:133.7px;top:415.5px;letter-spacing:-0.270px;">index.js</div>
<svg class="abs" style="left:97.1px;top:434.6px;" width="15.6" height="15.6" viewBox="0 0 16 16"><path d="M1.5,2.5 h5 l1.6,2.2 h6.9 v9 H1.5z" fill="#87939a"/></svg>
<svg class="abs" style="left:80.9px;top:439.5px;" width="10" height="7" viewBox="0 0 10 7"><path d="M0.8,0.9 L5,5.1 L9.2,0.9" fill="none" stroke="#a4a8aa" stroke-width="1.3"/></svg>
<div class="t" style="left:116.5px;top:434.9px;letter-spacing:0.214px;">MyButton</div>
<svg class="abs" style="left:114.2px;top:454.0px;" width="15.6" height="15.6" viewBox="0 0 16.6 16.6"><polygon fill="#9aa7b0" fill-opacity=".7" points="7,1 3,5 7,5"/><polygon fill="#9aa7b0" fill-opacity=".88" points="8,1 8,6 3,6 3,8.7 14,8.7 14,1"/><rect x="0.9" y="9.5" width="16.1" height="7.4" fill="#c5963f"/><text x="2.3" y="15.9" font-family="Liberation Sans,sans-serif" font-weight="bold" font-size="7.2" textLength="7.6" lengthAdjust="spacingAndGlyphs" fill="#4d3a17">JS</text></svg>
<div class="t" style="left:133.7px;top:454.4px;letter-spacing:-0.270px;">index.js</div>
<svg class="abs" style="left:97.1px;top:473.6px;" width="15.6" height="15.6" viewBox="0 0 16 16"><path d="M1.5,2.5 h5 l1.6,2.2 h6.9 v9 H1.5z" fill="#87939a"/></svg>
<svg class="abs" style="left:80.9px;top:478.5px;" width="10" height="7" viewBox="0 0 10 7"><path d="M0.8,0.9 L5,5.1 L9.2,0.9" fill="none" stroke="#a4a8aa" stroke-width="1.3"/></svg>
<div class="t" style="left:116.5px;top:473.9px;letter-spacing:-0.241px;">MyRecord</div>
<svg class="abs" style="left:114.2px;top:492.9px;" width="15.6" height="15.6" viewBox="0 0 16.6 16.6"><polygon fill="#9aa7b0" fill-opacity=".7" points="7,1 3,5 7,5"/><polygon fill="#9aa7b0" fill-opacity=".88" points="8,1 8,6 3,6 3,8.7 14,8.7 14,1"/><rect x="0.9" y="9.5" width="16.1" height="7.4" fill="#c5963f"/><text x="2.3" y="15.9" font-family="Liberation Sans,sans-serif" font-weight="bold" font-size="7.2" textLength="7.6" lengthAdjust="spacingAndGlyphs" fill="#4d3a17">JS</text></svg>
<div class="t" style="left:133.7px;top:493.3px;color:#6897bb;letter-spacing:-0.270px;">index.js</div>
<svg class="abs" style="left:97.1px;top:512.5px;" width="15.6" height="15.6" viewBox="0 0 16 16"><path d="M1.5,2.5 h5 l1.6,2.2 h6.9 v9 H1.5z" fill="#87939a"/></svg>
<svg class="abs" style="left:80.9px;top:517.4px;" width="10" height="7" viewBox="0 0 10 7"><path d="M0.8,0.9 L5,5.1 L9.2,0.9" fill="none" stroke="#a4a8aa" stroke-width="1.3"/></svg>
<div class="t" style="left:116.5px;top:512.8px;letter-spacing:-0.183px;">MyStatistics</div>
<svg class="abs" style="left:114.2px;top:531.8px;" width="15.6" height="15.6" viewBox="0 0 16.6 16.6"><polygon fill="#9aa7b0" fill-opacity=".7" points="7,1 3,5 7,5"/><polygon fill="#9aa7b0" fill-opacity=".88" points="8,1 8,6 3,6 3,8.7 14,8.7 14,1"/><rect x="0.9" y="9.5" width="16.1" height="7.4" fill="#c5963f"/><text x="2.3" y="15.9" font-family="Liberation Sans,sans-serif" font-weight="bold" font-size="7.2" textLength="7.6" lengthAdjust="spacingAndGlyphs" fill="#4d3a17">JS</text></svg>
<div class="t" style="left:133.7px;top:532.2px;letter-spacing:-0.270px;">index.js</div>
<svg class="abs" style="left:97.1px;top:551.4px;" width="15.6" height="15.6" viewBox="0 0 16 16"><path d="M1.5,2.5 h5 l1.6,2.2 h6.9 v9 H1.5z" fill="#87939a"/></svg>
<svg class="abs" style="left:80.9px;top:556.3px;" width="10" height="7" viewBox="0 0 10 7"><path d="M0.8,0.9 L5,5.1 L9.2,0.9" fill="none" stroke="#a4a8aa" stroke-width="1.3"/></svg>
<div class="t" style="left:116.5px;top:551.7px;letter-spacing:0.094px;">MyTitle</div>
<svg class="abs" style="left:114.2px;top:570.7px;" width="15.6" height="15.6" viewBox="0 0 16.6 16.6"><polygon fill="#9aa7b0" fill-opacity=".7" points="7,1 3,5 7,5"/><polygon fill="#9aa7b0" fill-opacity=".88" points="8,1 8,6 3,6 3,8.7 14,8.7 14,1"/><rect x="0.9" y="9.5" width="16.1" height="7.4" fill="#c5963f"/><text x="2.3" y="15.9" font-family="Liberation Sans,sans-serif" font-weight="bold" font-size="7.2" textLength="7.6" lengthAdjust="spacingAndGlyphs" fill="#4d3a17">JS</text></svg>
<div class="t" style="left:133.7px;top:571.1px;color:#6897bb;letter-spacing:-0.270px;">index.js</div>
<svg class="abs" style="left:97.1px;top:590.3px;" width="15.6" height="15.6" viewBox="0 0 16 16"><path d="M1.5,2.5 h5 l1.6,2.2 h6.9 v9 H1.5z" fill="#87939a"/></svg>
<svg class="abs" style="left:80.9px;top:595.2px;" width="10" height="7" viewBox="0 0 10 7"><path d="M0.8,0.9 L5,5.1 L9.2,0.9" fill="none" stroke="#a4a8aa" stroke-width="1.3"/></svg>
<div class="t" style="left:116.5px;top:590.6px;letter-spacing:-0.042px;">OnlineStudyHome</div>
<div class="abs" style="left:388.0px;top:163.7px;width:8.0px;height:179.7px;background:rgba(170,172,174,0.27);"></div>
<svg class="abs" style="left:1492.6px;top:67.4px;" width="12" height="13" viewBox="0 0 12 13"><path d="M5.4,0.6 a4.2,4.2 0 0 1 4.2,4.2 v3.2 l1.4,1.6 v0.8 H0 v-0.8 l1.4,-1.6 V4.8 a4.2,4.2 0 0 1 4,-4.2z" fill="#b4b6b7"/><path d="M3.9,11.4 h3 a1.5,1.5 0 0 1 -3,0z" fill="#b4b6b7"/><circle cx="9.4" cy="2.4" r="2.3" fill="#3592c4"/></svg>
<div class="t" style="left:1466.2px;top:107.2px;color:#bbbbbb;font-size:11px;letter-spacing:0.048px;transform:rotate(90deg);transform-origin:50% 50%;width:60.5px;text-align:left;">Notifications</div>
<div class="abs" style="left:1051.0px;top:56.0px;width:188.0px;height:25.5px;background:#4e5254;"></div>
<div class="abs" style="left:1051.0px;top:78.8px;width:188.0px;height:3.3px;background:#4a88c7;"></div>
<svg class="abs" style="left:405.9px;top:61.4px;" width="15.6" height="15.6" viewBox="0 0 16.6 16.6"><polygon fill="#9aa7b0" fill-opacity=".7" points="7,1 3,5 7,5"/><polygon fill="#9aa7b0" fill-opacity=".88" points="8,1 8,6 3,6 3,8.7 14,8.7 14,1"/><rect x="0.9" y="9.5" width="16.1" height="7.4" fill="#c5963f"/><text x="2.3" y="15.9" font-family="Liberation Sans,sans-serif" font-weight="bold" font-size="7.2" textLength="7.6" lengthAdjust="spacingAndGlyphs" fill="#4d3a17">JS</text></svg>
<div class="t" style="left:425.8px;top:61.8px;color:#6897bb;letter-spacing:-0.200px;">2-PlayerPKStudy\index.js</div>
<svg class="abs" style="left:563.7px;top:66.0px;" width="8" height="8" viewBox="0 0 8 8"><path d="M0.7,0.7 L7.3,7.3 M7.3,0.7 L0.7,7.3" stroke="#6e7173" stroke-width="1.1" fill="none"/></svg>
<svg class="abs" style="left:585.3px;top:61.4px;" width="15.6" height="15.6" viewBox="0 0 16.6 16.6"><polygon fill="#9aa7b0" fill-opacity=".7" points="7,1 3,5 7,5"/><polygon fill="#9aa7b0" fill-opacity=".88" points="8,1 8,6 3,6 3,8.7 14,8.7 14,1"/><rect x="0.9" y="9.5" width="16.1" height="7.4" fill="#c5963f"/><text x="2.3" y="15.9" font-family="Liberation Sans,sans-serif" font-weight="bold" font-size="7.2" textLength="7.6" lengthAdjust="spacingAndGlyphs" fill="#4d3a17">JS</text></svg>
<div class="t" style="left:605.9px;top:61.8px;color:#6897bb;letter-spacing:-0.125px;">MyRecord\index.js</div>
<svg class="abs" style="left:711.0px;top:66.0px;" width="8" height="8" viewBox="0 0 8 8"><path d="M0.7,0.7 L7.3,7.3 M7.3,0.7 L0.7,7.3" stroke="#6e7173" stroke-width="1.1" fill="none"/></svg>
<svg class="abs" style="left:732.2px;top:61.4px;" width="15.6" height="15.6" viewBox="0 0 16.6 16.6"><polygon fill="#9aa7b0" fill-opacity=".7" points="7,1 3,5 7,5"/><polygon fill="#9aa7b0" fill-opacity=".88" points="8,1 8,6 3,6 3,8.7 14,8.7 14,1"/><rect x="0.9" y="9.5" width="16.1" height="7.4" fill="#c5963f"/><text x="2.3" y="15.9" font-family="Liberation Sans,sans-serif" font-weight="bold" font-size="7.2" textLength="7.6" lengthAdjust="spacingAndGlyphs" fill="#4d3a17">JS</text></svg>
<div class="t" style="left:752.3px;top:61.8px;letter-spacing:0.087px;">SettingButton\index.js</div>
<svg class="abs" style="left:878.3px;top:66.0px;" width="8" height="8" viewBox="0 0 8 8"><path d="M0.7,0.7 L7.3,7.3 M7.3,0.7 L0.7,7.3" stroke="#6e7173" stroke-width="1.1" fill="none"/></svg>
<svg class="abs" style="left:900.7px;top:61.4px;" width="15.6" height="15.6" viewBox="0 0 16.6 16.6"><polygon fill="#9aa7b0" fill-opacity=".7" points="7,1 3,5 7,5"/><polygon fill="#9aa7b0" fill-opacity=".88" points="8,1 8,6 3,6 3,8.7 14,8.7 14,1"/><rect x="0.9" y="9.5" width="16.1" height="7.4" fill="#c5963f"/><text x="2.3" y="15.9" font-family="Liberation Sans,sans-serif" font-weight="bold" font-size="7.2" textLength="7.6" lengthAdjust="spacingAndGlyphs" fill="#4d3a17">JS</text></svg>
<div class="t" style="left:919.4px;top:61.8px;letter-spacing:-0.000px;">OnlineStudy\index.js</div>
<svg class="abs" style="left:1036.9px;top:66.0px;" width="8" height="8" viewBox="0 0 8 8"><path d="M0.7,0.7 L7.3,7.3 M7.3,0.7 L0.7,7.3" stroke="#6e7173" stroke-width="1.1" fill="none"/></svg>
<svg class="abs" style="left:1059.2px;top:61.4px;" width="15.6" height="15.6" viewBox="0 0 16.6 16.6"><polygon fill="#9aa7b0" fill-opacity=".7" points="7,1 3,5 7,5"/><polygon fill="#9aa7b0" fill-opacity=".88" points="8,1 8,6 3,6 3,8.7 14,8.7 14,1"/><rect x="0.9" y="9.5" width="16.1" height="7.4" fill="#c5963f"/><text x="2.3" y="15.9" font-family="Liberation Sans,sans-serif" font-weight="bold" font-size="7.2" textLength="7.6" lengthAdjust="spacingAndGlyphs" fill="#4d3a17">JS</text></svg>
<div class="t" style="left:1078.0px;top:61.8px;color:#6897bb;letter-spacing:-0.225px;">2-PlayerPKRecord\index.js</div>
<svg class="abs" style="left:1223.0px;top:66.0px;" width="8" height="8" viewBox="0 0 8 8"><path d="M0.7,0.7 L7.3,7.3 M7.3,0.7 L0.7,7.3" stroke="#6e7173" stroke-width="1.1" fill="none"/></svg>
<svg class="abs" style="left:1245.6px;top:61.4px;" width="15.6" height="15.6" viewBox="0 0 16.6 16.6"><polygon fill="#9aa7b0" fill-opacity=".7" points="7,1 3,5 7,5"/><polygon fill="#9aa7b0" fill-opacity=".88" points="8,1 8,6 3,6 3,8.7 14,8.7 14,1"/><rect x="0.9" y="9.5" width="16.1" height="7.4" fill="#c5963f"/><text x="2.3" y="15.9" font-family="Liberation Sans,sans-serif" font-weight="bold" font-size="7.2" textLength="7.6" lengthAdjust="spacingAndGlyphs" fill="#4d3a17">JS</text></svg>
<div class="t" style="left:1265.0px;top:61.8px;letter-spacing:-0.045px;">MyBanner\index.js</div>
<svg class="abs" style="left:1370.0px;top:66.0px;" width="8" height="8" viewBox="0 0 8 8"><path d="M0.7,0.7 L7.3,7.3 M7.3,0.7 L0.7,7.3" stroke="#6e7173" stroke-width="1.1" fill="none"/></svg>
<svg class="abs" style="left:1393.6px;top:61.4px;" width="15.6" height="15.6" viewBox="0 0 16.6 16.6"><polygon fill="#9aa7b0" fill-opacity=".7" points="7,1 3,5 7,5"/><polygon fill="#9aa7b0" fill-opacity=".88" points="8,1 8,6 3,6 3,8.7 14,8.7 14,1"/><rect x="0.9" y="9.5" width="16.1" height="7.4" fill="#c5963f"/><text x="2.3" y="15.9" font-family="Liberation Sans,sans-serif" font-weight="bold" font-size="7.2" textLength="7.6" lengthAdjust="spacingAndGlyphs" fill="#4d3a17">JS</text></svg>
<div class="t" style="left:1412.7px;top:61.8px;color:#6897bb;width:21px;overflow:hidden;-webkit-mask-image:linear-gradient(90deg,#000 55%,transparent 100%);mask-image:linear-gradient(90deg,#000 55%,transparent 100%);">MyT</div>
<svg class="abs" style="left:1443.6px;top:65.8px;" width="11" height="7" viewBox="0 0 11 7"><path d="M0.8,0.8 L5.3,5.4 L9.8,0.8" fill="none" stroke="#d0d2d3" stroke-width="1.5"/></svg>
<svg class="abs" style="left:1473.6px;top:63.4px;" width="4" height="12" viewBox="0 0 4 12"><circle cx="1.8" cy="1.6" r="1.4" fill="#d0d2d3"/><circle cx="1.8" cy="5.9" r="1.4" fill="#d0d2d3"/><circle cx="1.8" cy="10.2" r="1.4" fill="#d0d2d3"/></svg>
<div class="t" style="left:465.8px;top:587.4px;letter-spacing:-0.382px;">TwoPlayerPKRecord</div>
<svg class="abs" style="left:582.0px;top:592.0px;" width="5" height="8" viewBox="0 0 5 8"><path d="M0.8,0.8 L3.8,4 L0.8,7.2" fill="none" stroke="#7d8082" stroke-width="1"/></svg>
<div class="t" style="left:593.4px;top:587.4px;letter-spacing:-0.012px;">render()</div>
<div class="t" style="left:27.9px;top:612.8px;letter-spacing:-0.653px;">Run:</div>
<svg class="abs" style="left:69.2px;top:612.6px;" width="15.6" height="15.6" viewBox="0 0 16 16"><g fill="none" stroke="#4fb3d6" stroke-width="1.1"><ellipse cx="8" cy="8" rx="7.3" ry="2.9"/><ellipse cx="8" cy="8" rx="7.3" ry="2.9" transform="rotate(60 8 8)"/><ellipse cx="8" cy="8" rx="7.3" ry="2.9" transform="rotate(120 8 8)"/></g><circle cx="8" cy="8" r="1.5" fill="#4fb3d6"/></svg>
<div class="abs" style="left:80.2px;top:623.6px;width:5.2px;height:5.2px;border-radius:50%;background:#3fb950;border:0.6px solid #3c3f41"></div>
<div class="t" style="left:88.5px;top:612.8px;letter-spacing:-0.034px;">react-native start</div>
<svg class="abs" style="left:183.6px;top:617.0px;" width="8" height="8" viewBox="0 0 8 8"><path d="M0.7,0.7 L7.3,7.3 M7.3,0.7 L0.7,7.3" stroke="#6e7173" stroke-width="1.1" fill="none"/></svg>
<svg class="abs" style="left:214.8px;top:612.6px;" width="15.6" height="15.6" viewBox="0 0 16 16"><g fill="none" stroke="#4fb3d6" stroke-width="1.1"><ellipse cx="8" cy="8" rx="7.3" ry="2.9"/><ellipse cx="8" cy="8" rx="7.3" ry="2.9" transform="rotate(60 8 8)"/><ellipse cx="8" cy="8" rx="7.3" ry="2.9" transform="rotate(120 8 8)"/></g><circle cx="8" cy="8" r="1.5" fill="#4fb3d6"/></svg>
<div class="t" style="left:234.3px;top:612.8px;letter-spacing:-1.100px;">RNA</div>
<svg class="abs" style="left:263.8px;top:617.0px;" width="8" height="8" viewBox="0 0 8 8"><path d="M0.7,0.7 L7.3,7.3 M7.3,0.7 L0.7,7.3" stroke="#6e7173" stroke-width="1.1" fill="none"/></svg>
<div class="abs" style="left:203.0px;top:630.6px;width:79.6px;height:3.0px;background:#747a80;"></div>
<div class="abs" style="left:166.6px;top:614.0px;width:1.0px;height:3.0px;background:#7a7d7f;"></div>
<div class="abs" style="left:311.6px;top:616.0px;width:1.0px;height:3.4px;background:#8a8d8f;"></div>
<svg class="abs" style="left:1442.8px;top:613.7px;" width="13.2" height="13.2" viewBox="0 0 14 14"><polygon points="5.00,2.53 5.54,0.15 8.46,0.15 9.00,2.53 9.88,3.03 12.20,2.31 13.66,4.84 11.87,6.49 11.87,7.51 13.66,9.16 12.20,11.69 9.88,10.97 9.00,11.47 8.46,13.85 5.54,13.85 5.00,11.47 4.12,10.97 1.80,11.69 0.34,9.16 2.13,7.51 2.13,6.49 0.34,4.84 1.80,2.31 4.12,3.03" fill="#afb1b3" stroke="#afb1b3" stroke-width="0.5" stroke-linejoin="round"/><circle cx="7" cy="7" r="2.5" fill="#3c3f41"/></svg>
<div class="abs" style="left:1468.5px;top:619.3px;width:12.0px;height:1.9px;background:#afb1b3;"></div>
<div class="abs" style="left:48.4px;top:634.0px;width:1.0px;height:126.0px;background:#323232;"></div>
<svg class="abs" style="left:30.8px;top:640.8px;" width="11" height="12" viewBox="0 0 11 12"><path d="M0.2,0.2 L10.6,5.8 L0.2,11.4z" fill="#499c54"/></svg>
<svg class="abs" style="left:58.6px;top:643.0px;" width="10.4" height="12" viewBox="0 0 10.4 12"><path d="M5.2,11.6 V1.4 M0.8,5.6 L5.2,1.2 L9.6,5.6" fill="none" stroke="#afb1b3" stroke-width="1.7"/></svg>
<svg class="abs" style="left:28.6px;top:665.4px;" width="14" height="15" viewBox="0 0 14 15"><path d="M2.3,12.6 L8.2,6.7" stroke="#afb1b3" stroke-width="2.9" stroke-linecap="round"/><circle cx="9.5" cy="4.9" r="3.9" fill="#afb1b3"/><path d="M9.9,4.5 L14.5,-0.1" stroke="#3c3f41" stroke-width="2.9"/></svg>
<svg class="abs" style="left:58.6px;top:667.4px;" width="10.4" height="12" viewBox="0 0 10.4 12"><path d="M5.2,0.4 V10.6 M0.8,6.4 L5.2,10.8 L9.6,6.4" fill="none" stroke="#afb1b3" stroke-width="1.5"/></svg>
<div class="abs" style="left:25.4px;top:688.2px;width:19.2px;height:1.0px;background:#515456;"></div>
<div class="abs" style="left:30.6px;top:700.2px;width:9.8px;height:10.0px;background:#5f6061;"></div>
<svg class="abs" style="left:57.0px;top:692.0px;" width="14" height="14" viewBox="0 0 14 14"><path d="M0.6,1.2 H13 M0.6,6 H10.4 a2.6,2.6 0 0 1 0,5.2 H7.2 M0.6,11.2 H3.4 M9.2,8.8 L6.8,11.2 L9.2,13.6" fill="none" stroke="#afb1b3" stroke-width="1.5"/></svg>
<div class="abs" style="left:25.4px;top:720.0px;width:19.2px;height:1.0px;background:#515456;"></div>
<div class="abs" style="left:52.4px;top:713.6px;width:21.8px;height:21px;border-radius:3px;background:#5c6062"></div>
<svg class="abs" style="left:57.0px;top:718.0px;" width="13.4" height="12" viewBox="0 0 13.4 12"><path d="M0.4,10.8 H13 M0.4,2 H5.4 M0.4,6 H5.4" stroke="#d6d8d9" stroke-width="1.5" fill="none"/><path d="M9.4,0.2 V7 M6.4,4.6 L9.4,7.8 L12.4,4.6" stroke="#d6d8d9" stroke-width="1.5" fill="none"/></svg>
<svg class="abs" style="left:31.6px;top:746.6px;" width="8" height="6" viewBox="0 0 8 6"><path d="M0.6,0.6 L3,3 L0.6,5.4 M4.4,0.6 L6.8,3 L4.4,5.4" fill="none" stroke="#afb1b3" stroke-width="0.9"/></svg>
<svg class="abs" style="left:59.8px;top:746.6px;" width="8" height="6" viewBox="0 0 8 6"><path d="M0.6,0.6 L3,3 L0.6,5.4 M4.4,0.6 L6.8,3 L4.4,5.4" fill="none" stroke="#afb1b3" stroke-width="0.9"/></svg>
<div class="t mono con" style="left:88.2px;top:639.8px;height:20px;line-height:20px;">109 actionable tasks: 2 executed, 107 up-to-date</div>
<div class="t mono con" style="left:88.2px;top:661.2px;height:20px;line-height:20px;"><b style="color:#18a4a8">info</b> Connecting to the development server...</div>
<div class="t mono con" style="left:88.2px;top:682.8px;height:20px;line-height:20px;"><b style="color:#18a4a8">info</b> Starting the app on "emulator-5554"...</div>
<div class="t mono con" style="left:88.2px;top:704.4px;height:20px;line-height:20px;">Starting: Intent { cmp=com.fzustudyroom/.MainActivity }</div>
<div class="abs" style="left:89.0px;top:750.0px;width:1058.0px;height:7.6px;background:#4d4d4d;"></div>
<div class="abs" style="left:1477.8px;top:732.0px;width:8.0px;height:25.6px;background:#4d4d4d;"></div>
<svg class="abs" style="left:31.4px;top:766.0px;" width="8" height="11" viewBox="0 0 8 11"><path d="M1.8,1 V10.6 M1.8,7.4 C1.8,5 6.2,6 6.2,3" fill="none" stroke="#afb1b3" stroke-width="1.8"/><circle cx="6.2" cy="2.4" r="1.7" fill="#afb1b3"/><circle cx="1.8" cy="1.5" r="1.5" fill="#afb1b3"/></svg>
<div class="t" style="left:45.8px;top:763.6px;font-size:11px;letter-spacing:-0.131px;">Git</div>
<div class="abs" style="left:69.8px;top:760.0px;width:51.8px;height:20.0px;background:#2d2f30;"></div>
<svg class="abs" style="left:79.0px;top:766.0px;" width="12" height="11" viewBox="0 0 12 11"><path d="M0.2,0.3 L8.4,5 L0.2,9.8z" fill="#c9cbcc"/><circle cx="9.6" cy="9" r="1.7" fill="#3fd24d"/></svg>
<div class="t" style="left:94.7px;top:763.6px;color:#dfe0e0;font-size:11px;letter-spacing:-1.044px;">Run</div>
<svg class="abs" style="left:133.6px;top:766.6px;" width="10" height="9" viewBox="0 0 10 9"><path d="M3,1 H9.6 M3,4.4 H9.6 M3,7.8 H9.6" stroke="#afb1b3" stroke-width="1.5"/><path d="M0,1 H1.8 M0,4.4 H1.8 M0,7.8 H1.8" stroke="#afb1b3" stroke-width="1.5"/></svg>
<div class="t" style="left:148.2px;top:763.6px;font-size:11px;letter-spacing:-0.626px;">TODO</div>
<svg class="abs" style="left:198.6px;top:765.8px;" width="10.4" height="10.4" viewBox="0 0 10.4 10.4"><circle cx="5.2" cy="5.2" r="5" fill="#afb1b3"/><path d="M5.2,2.2 V6 M5.2,7.2 V8.6" stroke="#3c3f41" stroke-width="1.4"/></svg>
<div class="t" style="left:214.5px;top:763.6px;font-size:11px;letter-spacing:-0.253px;">Problems</div>
<svg class="abs" style="left:280.2px;top:766.0px;" width="10.6" height="10" viewBox="0 0 10.6 10"><rect x="0" y="0" width="10.4" height="9.8" rx="1" fill="#afb1b3"/><path d="M1.8,2.2 L4.2,4.4 L1.8,6.6 M5,7.4 H8.4" stroke="#3c3f41" stroke-width="1.1" fill="none"/></svg>
<div class="t" style="left:295.8px;top:763.6px;font-size:11px;letter-spacing:-0.083px;">Terminal</div>
<svg class="abs" style="left:5.4px;top:786.0px;" width="13" height="11.6" viewBox="0 0 13 11.6"><path d="M3,2.6 H12.2 V11 H3z M0.8,8.6 V0.6 H10" fill="none" stroke="#afb1b3" stroke-width="1.1"/></svg>
<div class="t" style="left:26.6px;top:783.8px;letter-spacing:-0.152px;">Localized WebStorm 2022.1 is available // Switch and restart (today 下午 3:54)</div>
<div class="t" style="left:1114.0px;top:783.8px;color:#9da0a2;letter-spacing:-1.100px;">19:71</div>
<div class="t" style="left:1151.7px;top:783.8px;color:#9da0a2;letter-spacing:-1.100px;">LF</div>
<div class="t" style="left:1173.8px;top:783.8px;color:#9da0a2;letter-spacing:-0.875px;">UTF-8</div>
<div class="t" style="left:1215.8px;top:783.8px;color:#9da0a2;letter-spacing:-0.690px;">2 spaces</div>
<div class="t" style="left:1272.3px;top:783.8px;color:#9da0a2;letter-spacing:-0.421px;">TypeScript 4.5.4</div>
<svg class="abs" style="left:1366.0px;top:786.4px;" width="8" height="11" viewBox="0 0 8 11"><path d="M1.8,1 V10.6 M1.8,7.4 C1.8,5 6.2,6 6.2,3" fill="none" stroke="#afb1b3" stroke-width="1.8"/><circle cx="6.2" cy="2.4" r="1.7" fill="#afb1b3"/><circle cx="1.8" cy="1.5" r="1.5" fill="#afb1b3"/></svg>
<div class="t" style="left:1381.7px;top:783.8px;color:#9da0a2;letter-spacing:0.049px;">304-frontend</div>
<svg class="abs" style="left:1460.4px;top:786.0px;" width="12" height="11" viewBox="0 0 12 11"><rect x="2" y="5" width="9" height="6" fill="#afb1b3"/><path d="M1,5 V2.6 a2.3,2.3 0 0 1 4.6,0 V5" fill="none" stroke="#afb1b3" stroke-width="1.3"/></svg>
<svg class="abs" style="left:1483.4px;top:785.4px;" width="17" height="13" viewBox="0 0 17 13"><circle cx="7.4" cy="5.4" r="5.2" fill="#afb1b3"/><path d="M5.4,4 a2,1.9 0 1 1 2.6,1.9 v1.2 M8,8.6 v1" stroke="#3c3f41" stroke-width="1.2" fill="none"/><circle cx="12.6" cy="9.6" r="2.7" fill="#afb1b3" stroke="#3c3f41" stroke-width="0.8"/><circle cx="12.6" cy="9.6" r="1" fill="#3c3f41"/></svg>
<div class="t wm" style="left:1072.6px;top:756.2px;height:36px;line-height:36px;color:#cdcdcd;font-size:26.8px;letter-spacing:1.065px;font-family:'DejaVu Sans','Liberation Sans',sans-serif;">CSDN</div>
<div class="t wm" style="left:1159.8px;top:756.4px;height:36px;line-height:36px;color:#cdcdcd;font-size:22.4px;transform:scaleX(1.19);transform-origin:0 0;">@</div>
<div class="t wm" style="left:1186.7px;top:756.9px;height:36px;line-height:36px;color:#cdcdcd;font-size:28.2px;letter-spacing:1.66px;">穿梭在银河的火箭队</div>
<div class="t wm" style="left:1452.8px;top:756.2px;height:36px;line-height:36px;color:#cdcdcd;font-size:27.2px;font-family:'DejaVu Sans','Liberation Sans',sans-serif;letter-spacing:0.4px;transform:scaleX(1.1);transform-origin:0 0;">10</div>
</body>
</html>
